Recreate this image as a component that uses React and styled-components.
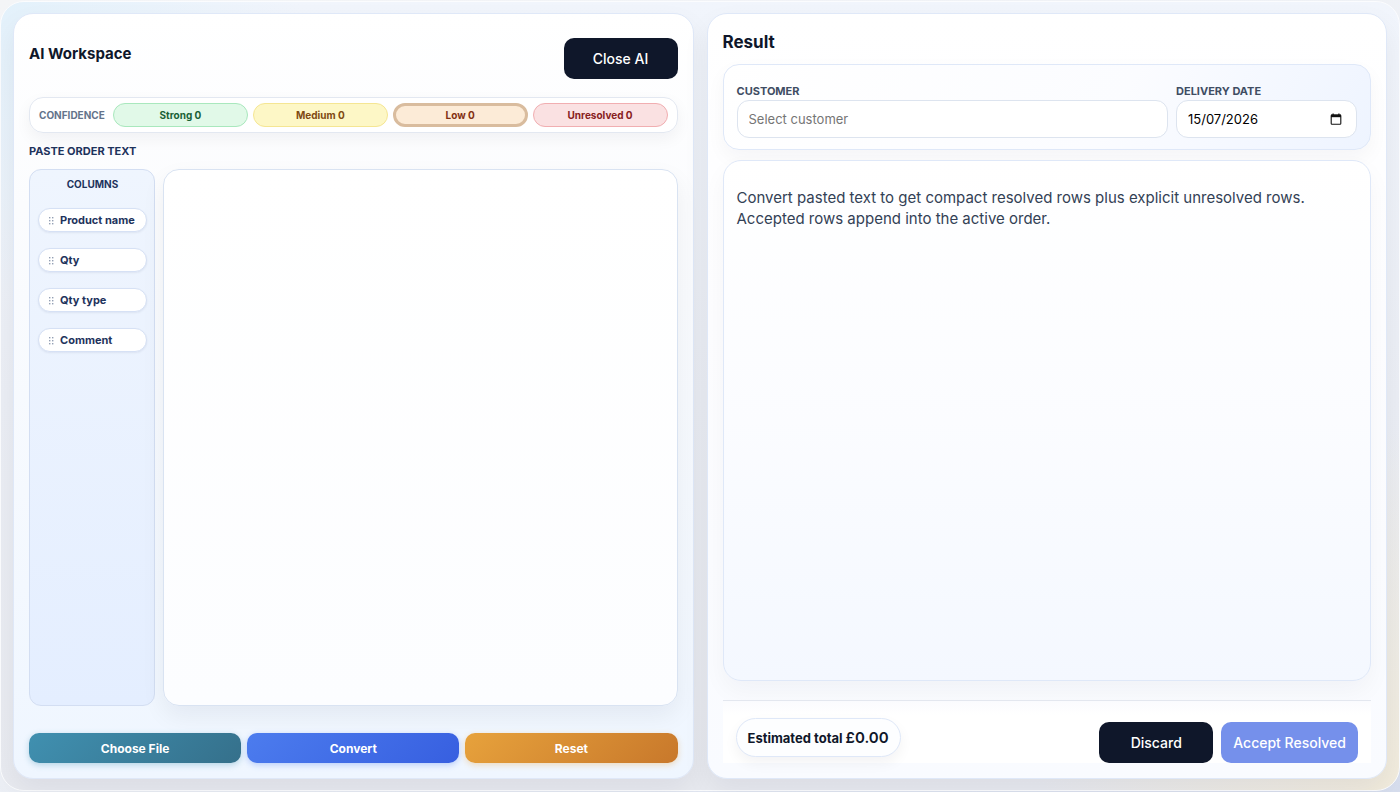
import { useState } from "react";
import styled, { createGlobalStyle, css } from "styled-components";

const GlobalStyle = createGlobalStyle`
  * {
    box-sizing: border-box;
  }
  body {
    margin: 0;
    background: linear-gradient(160deg, #f4f5f7 0%, #eceff5 60%, #d6dded 100%);
    color: #0f172a;
    font-family: Inter, "Liberation Sans", sans-serif;
  }
  button,
  input,
  textarea {
    font-family: inherit;
  }
`;

const columns = ["Product name", "Qty", "Qty type", "Comment"];

const levels = [
  { id: "strong", label: "Strong" },
  { id: "medium", label: "Medium" },
  { id: "low", label: "Low" },
  { id: "unresolved", label: "Unresolved" },
];

const levelColors = {
  strong: { bg: "#e1f9e8", border: "#a9e8bd", text: "#1b6136" },
  medium: { bg: "#fdf7c6", border: "#f5e693", text: "#804a12" },
  low: { bg: "#fcebd7", border: "#d9bc9e", text: "#833013" },
  unresolved: { bg: "#fae1e2", border: "#f1aeb1", text: "#872020" },
};

const GripIcon = () => (
  <svg width="5" height="9" viewBox="0 0 5 9" fill="#94a0b5" aria-hidden="true">
    {[0, 3, 6].map((y) => (
      <g key={y}>
        <rect x="0" y={y + 1} width="1.4" height="1.4" />
        <rect x="3" y={y + 1} width="1.4" height="1.4" />
      </g>
    ))}
  </svg>
);

const CalendarIcon = () => (
  <svg width="12" height="12" viewBox="0 0 12 12" aria-hidden="true">
    <rect x="1.2" y="2" width="9.6" height="9.2" rx="0.8" fill="none" stroke="#111" strokeWidth="1.1" />
    <path d="M1 1.6h10v2.6H1z" fill="#111" />
    <path d="M3.1 0.4v1.6M8.9 0.4v1.6" stroke="#111" strokeWidth="1.2" />
  </svg>
);

const App = () => {
  const [text, setText] = useState("");
  const [customer, setCustomer] = useState("");
  const [date, setDate] = useState("15/07/2026");
  const [active, setActive] = useState("low");

  return (
    <>
      <GlobalStyle />
      <Page>
        <Shell>
          <Panel $tinted>
            <Header>
              <WorkspaceTitle>AI Workspace</WorkspaceTitle>
              <Button>Close AI</Button>
            </Header>

            <Confidence>
              <ConfidenceLabel>CONFIDENCE</ConfidenceLabel>
              {levels.map((level) => (
                <LevelButton
                  key={level.id}
                  $colors={levelColors[level.id]}
                  $active={active === level.id}
                  onClick={() => setActive(level.id)}
                >
                  {level.label} 0
                </LevelButton>
              ))}
            </Confidence>

            <PasteLabel htmlFor="order-text">PASTE ORDER TEXT</PasteLabel>
            <Editor>
              <Columns>
                <ColumnsTitle>COLUMNS</ColumnsTitle>
                {columns.map((column) => (
                  <Chip key={column} draggable>
                    <GripIcon />
                    {column}
                  </Chip>
                ))}
              </Columns>
              <OrderText
                id="order-text"
                value={text}
                onChange={(e) => setText(e.target.value)}
              />
            </Editor>

            <Actions>
              <ActionButton $from="#4090b0" $to="#35708b">
                Choose File
              </ActionButton>
              <ActionButton $from="#4c7cee" $to="#375fe0">
                Convert
              </ActionButton>
              <ActionButton $from="#e7a23c" $to="#c8782b" onClick={() => setText("")}>
                Reset
              </ActionButton>
            </Actions>
          </Panel>

          <Panel>
            <ResultTitle>Result</ResultTitle>
            <OrderForm>
              <Field>
                <FieldLabel htmlFor="customer">CUSTOMER</FieldLabel>
                <InputBox>
                  <TextInput
                    id="customer"
                    placeholder="Select customer"
                    value={customer}
                    onChange={(e) => setCustomer(e.target.value)}
                  />
                </InputBox>
              </Field>
              <Field>
                <FieldLabel htmlFor="delivery">DELIVERY DATE</FieldLabel>
                <InputBox>
                  <TextInput
                    id="delivery"
                    value={date}
                    onChange={(e) => setDate(e.target.value)}
                  />
                  <IconButton type="button" aria-label="Open calendar">
                    <CalendarIcon />
                  </IconButton>
                </InputBox>
              </Field>
            </OrderForm>

            <ResultBox>
              <Hint>
                Convert pasted text to get compact resolved rows plus explicit
                unresolved rows. Accepted rows append into the active order.
              </Hint>
            </ResultBox>

            <Footer>
              <Total>
                Estimated total <Amount>£0.00</Amount>
              </Total>
              <FooterButtons>
                <Button>Discard</Button>
                <Button $primary>Accept Resolved</Button>
              </FooterButtons>
            </Footer>
          </Panel>
        </Shell>
      </Page>
    </>
  );
};
export default App;

const Page = styled.div`
  display: flex;
  min-height: 100vh;
  padding: 1px 0;
`;
const Shell = styled.main`
  flex: 1;
  display: grid;
  grid-template-columns: minmax(0, 1fr) minmax(0, 1fr);
  gap: 13px;
  padding: 11px 12px;
  border: 1px solid #fbfcfe;
  border-radius: 24px;
  background:
    radial-gradient(circle at 0 0, #e3f1fb 0, rgba(227, 241, 251, 0) 300px),
    radial-gradient(circle at 100% 100%, #f1ebdc 0, rgba(241, 235, 220, 0) 360px),
    linear-gradient(180deg, #f1f5fc 0%, #ebeef5 50%, #e8eaf0 100%);
`;
const Panel = styled.section`
  display: flex;
  flex-direction: column;
  padding: 15px;
  border: 1px solid #dfe8f8;
  border-radius: 20px;
  background: linear-gradient(180deg, #ffffff 0%, #fdfdff 40%, #f9fbff 100%);
  box-shadow: 0 12px 28px rgba(15, 23, 42, 0.06);

  ${({ $tinted }) =>
    $tinted &&
    css`
      background: linear-gradient(180deg, #ffffff 0%, #fbfcfe 25%, #eff6ff 100%);
    `}
`;
const Header = styled.header`
  display: flex;
  justify-content: space-between;
  align-items: flex-start;
  padding: 9px 0 18px;
`;
const WorkspaceTitle = styled.h1`
  margin: 0;
  font-size: 15px;
  line-height: 32px;
  font-weight: 700;
`;
const ResultTitle = styled.h2`
  margin: 0 0 9px;
  font-size: 17px;
  line-height: 26px;
  font-weight: 700;
`;
const Button = styled.button`
  min-width: 114px;
  height: 41px;
  padding: 0 12px;
  border: 0;
  border-radius: 10px;
  background: ${({ $primary }) => ($primary ? "#7590eb" : "#0f172a")};
  color: #ffffff;
  font-size: 14px;
  font-weight: 500;
  cursor: pointer;
`;
const Confidence = styled.div`
  display: grid;
  grid-template-columns: 69px repeat(4, minmax(0, 1fr));
  align-items: center;
  gap: 5px;
  padding: 5px 9px;
  border: 1px solid #e3e8f1;
  border-radius: 14px;
  background: rgba(255, 255, 255, 0.8);
  box-shadow: 0 6px 16px rgba(15, 23, 42, 0.05);
`;
const ConfidenceLabel = styled.span`
  color: #64748b;
  font-size: 10px;
  font-weight: 700;
`;
const LevelButton = styled.button`
  height: 24px;
  padding: 0;
  border: ${({ $active }) => ($active ? 3 : 1)}px solid
    ${({ $colors }) => $colors.border};
  border-radius: 12px;
  background: ${({ $colors }) => $colors.bg};
  color: ${({ $colors }) => $colors.text};
  font-size: 10px;
  font-weight: 700;
  cursor: pointer;
`;
const PasteLabel = styled.label`
  color: #1e335c;
  font-size: 11px;
  line-height: 36px;
  font-weight: 700;
`;
const Editor = styled.div`
  flex: 1;
  display: grid;
  grid-template-columns: 126px minmax(0, 1fr);
  gap: 8px;
`;
const Columns = styled.div`
  display: flex;
  flex-direction: column;
  gap: 16px;
  padding: 7px 7px 7px 8px;
  border: 1px solid #d3def2;
  border-radius: 12px;
  background: linear-gradient(180deg, #eff5fe 0%, #e4eeff 100%);
`;
const ColumnsTitle = styled.div`
  color: #1e335c;
  font-size: 10px;
  line-height: 15px;
  font-weight: 700;
  text-align: center;
`;
const Chip = styled.div`
  display: flex;
  align-items: center;
  gap: 6px;
  height: 24px;
  padding: 0 10px;
  border: 1px solid #d6e1f5;
  border-radius: 12px;
  background: #ffffff;
  box-shadow: 0 1px 2px rgba(30, 51, 92, 0.08);
  color: #1e335c;
  font-size: 11px;
  font-weight: 700;
  white-space: nowrap;
  cursor: grab;
`;
const OrderText = styled.textarea`
  width: 100%;
  height: 100%;
  padding: 14px;
  border: 1px solid #d9e3f2;
  border-radius: 16px;
  outline: none;
  resize: none;
  background: linear-gradient(180deg, #ffffff 0%, #fcfdff 100%);
  box-shadow: 0 10px 24px rgba(15, 23, 42, 0.06);
  font-size: 14px;
`;
const Actions = styled.div`
  display: grid;
  grid-template-columns: repeat(3, minmax(0, 1fr));
  gap: 6px;
  padding-top: 27px;
`;
const ActionButton = styled.button`
  height: 30px;
  border: 0;
  border-radius: 10px;
  background: linear-gradient(135deg, ${({ $from }) => $from}, ${({ $to }) => $to});
  box-shadow: 0 2px 6px ${({ $from }) => $from}55;
  color: #ffffff;
  font-size: 12px;
  font-weight: 700;
  cursor: pointer;
`;
const OrderForm = styled.form`
  display: grid;
  grid-template-columns: minmax(0, 1fr) 181px;
  gap: 8px;
  padding: 17px 13px 11px;
  border: 1px solid #dfe8f8;
  border-radius: 16px;
  background: linear-gradient(120deg, #ffffff 0%, #fbfcff 60%, #eef4ff 100%);
  box-shadow: 0 8px 20px rgba(15, 23, 42, 0.04);
`;
const Field = styled.div`
  display: flex;
  flex-direction: column;
`;
const FieldLabel = styled.label`
  color: #3f4d63;
  font-size: 11px;
  line-height: 18px;
  font-weight: 700;
`;
const InputBox = styled.div`
  display: flex;
  align-items: center;
  height: 38px;
  padding: 0 12px 0 11px;
  border: 1px solid #dde4ef;
  border-radius: 12px;
  background: #ffffff;
`;
const TextInput = styled.input`
  flex: 1;
  min-width: 0;
  padding: 0;
  border: 0;
  outline: none;
  background: transparent;
  color: #000000;
  font-size: 13px;

  &::placeholder {
    color: #757575;
  }
`;
const IconButton = styled.button`
  display: flex;
  padding: 2px;
  border: 0;
  background: none;
  cursor: pointer;
`;
const ResultBox = styled.div`
  flex: 1;
  margin-top: 10px;
  padding: 26px 13px;
  border: 1px solid #dfe8f8;
  border-radius: 18px;
  background: linear-gradient(180deg, #ffffff 0%, #fbfcff 50%, #f4f8ff 100%);
  box-shadow: 0 10px 24px rgba(15, 23, 42, 0.04);
`;
const Hint = styled.p`
  max-width: 600px;
  margin: 0;
  color: #334155;
  font-size: 15px;
  line-height: 21px;
`;
const Footer = styled.footer`
  display: flex;
  justify-content: space-between;
  align-items: flex-start;
  margin-top: 19px;
  padding: 17px 13px 0;
  border-top: 1px solid #e3e7ef;
  background: linear-gradient(180deg, #fafbfe 0, #ffffff 14px);
`;
const Total = styled.div`
  display: flex;
  align-items: center;
  gap: 3px;
  height: 39px;
  padding: 0 11px;
  border: 1px solid #dfe8f8;
  border-radius: 20px;
  background: #fdfeff;
  box-shadow: 0 6px 14px rgba(15, 23, 42, 0.05);
  font-size: 13px;
  font-weight: 700;
`;
const Amount = styled.strong`
  font-size: 15px;
  font-weight: 600;
`;
const FooterButtons = styled.div`
  display: flex;
  gap: 8px;
  padding-top: 4px;
`;
